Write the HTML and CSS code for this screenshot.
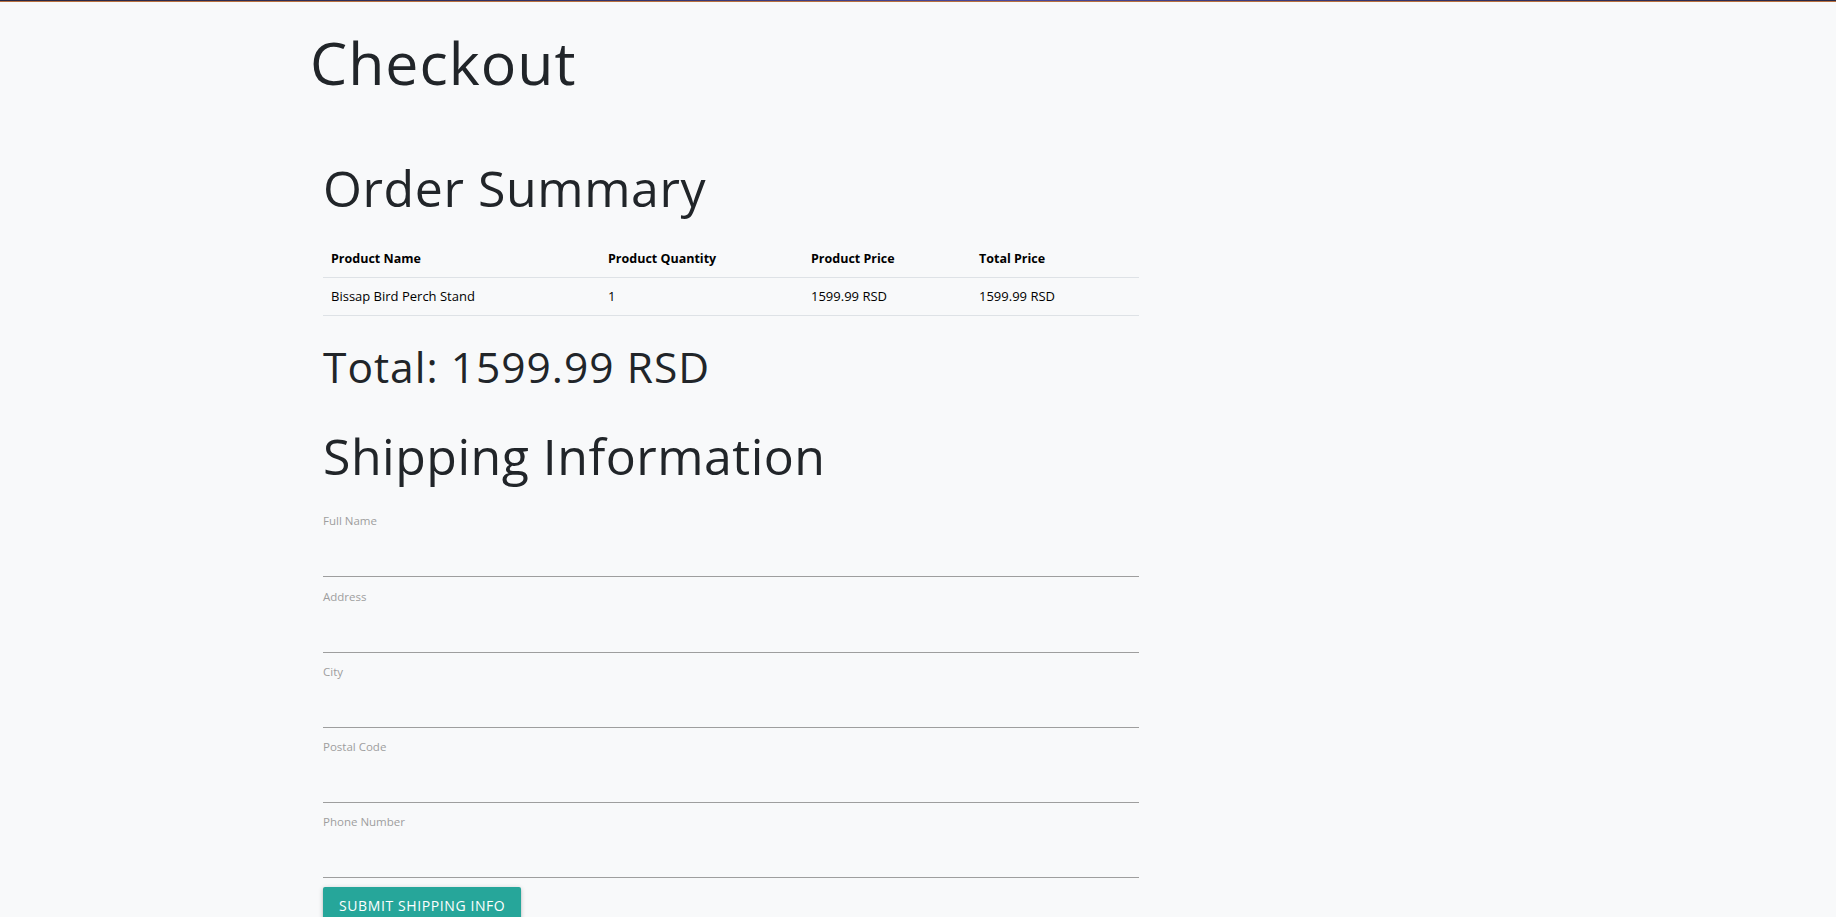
FILE: index.html
```html
<!DOCTYPE html>
<html lang="en">
<head>
<meta charset="utf-8">
<title>Checkout</title>
<link rel="stylesheet" href="styles.css">
</head>
<body>
<div class="topbar"></div>
<main class="page">
  <h1 class="title">Checkout</h1>
  <section class="content">
    <h2 class="section-title">Order Summary</h2>
    <table class="order-table">
      <colgroup>
        <col class="c1"><col class="c2"><col class="c3"><col class="c4">
      </colgroup>
      <thead>
        <tr>
          <th>Product Name</th>
          <th>Product Quantity</th>
          <th>Product Price</th>
          <th>Total Price</th>
        </tr>
      </thead>
      <tbody>
        <tr>
          <td>Bissap Bird Perch Stand</td>
          <td>1</td>
          <td>1599.99 RSD</td>
          <td>1599.99 RSD</td>
        </tr>
      </tbody>
    </table>
    <h3 class="total">Total: 1599.99 RSD</h3>
    <h2 class="section-title shipping">Shipping Information</h2>
    <form class="form">
      <div class="field"><label for="n">Full Name</label><input id="n" type="text"></div>
      <div class="field"><label for="a">Address</label><input id="a" type="text"></div>
      <div class="field"><label for="c">City</label><input id="c" type="text"></div>
      <div class="field"><label for="p">Postal Code</label><input id="p" type="text"></div>
      <div class="field"><label for="ph">Phone Number</label><input id="ph" type="text"></div>
      <button type="button" class="btn">Submit Shipping Info</button>
    </form>
  </section>
</main>
</body>
</html>
```

FILE: styles.css
```css
html, body {
  margin: 0;
  padding: 0;
}
body {
  background: #f8f9fa;
  color: #212529;
  font-family: "Open Sans", "Noto Sans", sans-serif;
  overflow: hidden;
}
.topbar {
  height: 1px;
  background: linear-gradient(90deg, #2a2741 0%, #35356e 35%, #4b4aa0 55%, #35356e 75%, #2a2741 100%);
  border-bottom: 1px solid #b8703f;
}
.page {
  padding: 25px 0 0 310px;
}
.title {
  margin: 0;
  font-size: 59px;
  line-height: 71px;
  font-weight: 400;
  letter-spacing: 1px;
}
.content {
  width: 816px;
  margin-left: 13px;
}
.section-title {
  margin: 60px 0 0 0;
  font-size: 50px;
  line-height: 60px;
  font-weight: 400;
  letter-spacing: 0.6px;
}
.order-table {
  margin-top: 22px;
  width: 816px;
  table-layout: fixed;
  border-collapse: collapse;
  font-size: 13px;
  line-height: 21px;
}
.order-table .c1 { width: 277px; }
.order-table .c2 { width: 203px; }
.order-table .c3 { width: 168px; }
.order-table th,
.order-table td {
  text-align: left;
  padding: 8px 8px;
  border-bottom: 1px solid #dee2e6;
  color: #000;
  white-space: nowrap;
}
.order-table th {
  font-weight: 700;
  font-size: 12.5px;
}
.total {
  margin: 25px 0 0 0;
  font-size: 42.5px;
  line-height: 51px;
  font-weight: 400;
  letter-spacing: 1px;
}
.section-title.shipping {
  margin-top: 34px;
  letter-spacing: 0.5px;
}
.form {
  margin-top: 16px;
  display: flex;
  flex-direction: column;
}
.field {
  display: flex;
  flex-direction: column;
  padding-top: 11.3px;
}
.field label {
  font-size: 11.5px;
  line-height: 15px;
  color: #9e9e9e;
}
.field input {
  height: 49px;
  box-sizing: border-box;
  border: none;
  border-bottom: 1px solid #9e9e9e;
  background: transparent;
  outline: none;
  padding: 0;
  font: inherit;
}
.btn {
  align-self: flex-start;
  margin-top: 9px;
  height: 36px;
  padding: 0 16px;
  border: none;
  border-radius: 2px;
  background: #26a69a;
  color: #fff;
  font-family: "Open Sans", "Noto Sans", sans-serif;
  font-size: 14px;
  letter-spacing: 0.6px;
  white-space: nowrap;
  text-transform: uppercase;
  box-shadow: 0 2px 2px 0 rgba(0,0,0,.14), 0 3px 1px -2px rgba(0,0,0,.12), 0 1px 5px 0 rgba(0,0,0,.2);
}
```
